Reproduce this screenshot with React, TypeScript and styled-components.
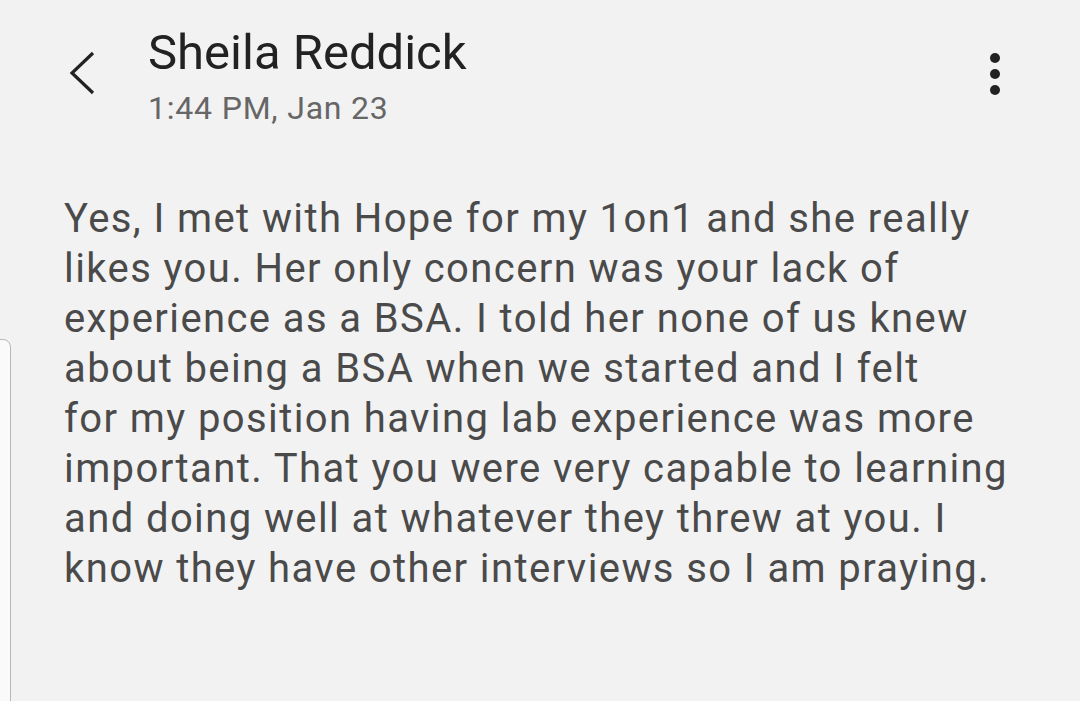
import React from "react";
import styled, { createGlobalStyle } from "styled-components";

const GlobalStyle = createGlobalStyle`
    html, body {
        margin: 0;
        padding: 0;
        background: #f2f2f2;
    }
    body {
        font-family: Roboto, "Noto Sans", "Liberation Sans", sans-serif;
    }
`;

const Screen = styled.div`
    position: relative;
    width: 1080px;
    height: 701px;
    overflow: hidden;
    background: #f2f2f2;
`;

const Header = styled.header`
    display: flex;
    align-items: flex-start;
    padding: 24px 80px 0 68px;
`;

const BackButton = styled.button`
    background: transparent;
    border: 0;
    padding: 0;
    margin: 27px 0 0 0;
    width: 80px;
    display: flex;
    cursor: pointer;
`;

const TitleBlock = styled.div`
    flex: 1;
    display: flex;
    flex-direction: column;
`;

const Name = styled.h1`
    margin: 0;
    font-size: 49px;
    font-weight: 400;
    line-height: 58px;
    color: #222;
`;

const Timestamp = styled.div`
    margin-top: 6px;
    font-size: 32px;
    letter-spacing: 0.8px;
    line-height: 40px;
    color: #666;
`;

const MenuButton = styled.button`
    background: transparent;
    border: 0;
    padding: 0;
    margin: 29px 0 0 0;
    display: flex;
    flex-direction: column;
    gap: 6px;
    cursor: pointer;
`;

const Dot = styled.span`
    width: 10px;
    height: 10px;
    border-radius: 50%;
    background: #222;
`;

const Message = styled.p`
    margin: 0;
    padding: 66px 40px 0 64px;
    font-size: 40px;
    letter-spacing: 1.4px;
    line-height: 50px;
    color: #4a4a4a;
`;

const Line = styled.span`
    display: block;
    white-space: nowrap;
`;

const SidePeek = styled.div`
    position: absolute;
    left: -10px;
    top: 339px;
    width: 19px;
    height: 400px;
    background: #fafafa;
    border: 1px solid #b8b8b8;
    border-radius: 0 8px 0 0;
`;

const lines = [
    "Yes, I met with Hope for my 1on1 and she really",
    "likes you. Her only concern was your lack of",
    "experience as a BSA. I told her none of us knew",
    "about being a BSA when we started and I felt",
    "for my position having lab experience was more",
    "important. That you were very capable to learning",
    "and doing well at whatever they threw at you. I",
    "know they have other interviews so I am praying.",
];

export default function App() {
    return (
        <Screen>
            <GlobalStyle />
            <Header>
                <BackButton aria-label="Back">
                    <svg width="28" height="44" viewBox="0 0 28 44">
                        <path d="M25 2 L4 22 L25 42" fill="none" stroke="#222" strokeWidth="3.2" />
                    </svg>
                </BackButton>
                <TitleBlock>
                    <Name>Sheila Reddick</Name>
                    <Timestamp>1:44 PM, Jan 23</Timestamp>
                </TitleBlock>
                <MenuButton aria-label="More options">
                    <Dot />
                    <Dot />
                    <Dot />
                </MenuButton>
            </Header>
            <Message>
                {lines.map((l) => (
                    <Line key={l}>{l}</Line>
                ))}
            </Message>
            <SidePeek />
        </Screen>
    );
}
